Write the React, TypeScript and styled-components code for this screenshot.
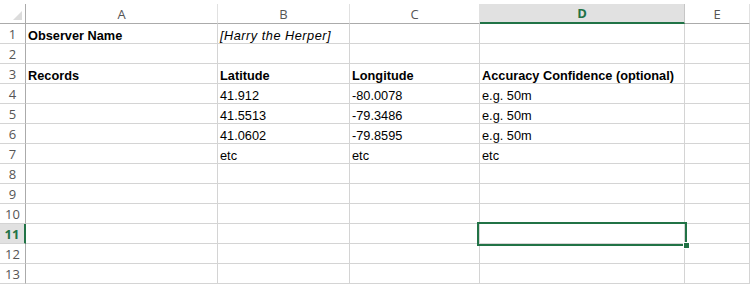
import { createGlobalStyle, styled } from 'styled-components'

const GlobalStyle = createGlobalStyle`
  body {
    margin: 0;
    background: #ffffff;
  }
`

const green = '#217346'
const gridLine = '#d4d4d4'
const headerLine = '#ababab'

const columns = [
  { name: 'A', width: 192 },
  { name: 'B', width: 132 },
  { name: 'C', width: 130 },
  { name: 'D', width: 205 },
  { name: 'E', width: 65 },
]

type CellData = { text: string; bold?: boolean; italic?: boolean }

const rows: CellData[][] = [
  [{ text: 'Observer Name', bold: true }, { text: '[Harry the Herper]', italic: true }],
  [],
  [
    { text: 'Records', bold: true },
    { text: 'Latitude', bold: true },
    { text: 'Longitude', bold: true },
    { text: 'Accuracy Confidence (optional)', bold: true },
  ],
  [{ text: '' }, { text: '41.912' }, { text: '-80.0078' }, { text: 'e.g. 50m' }],
  [{ text: '' }, { text: '41.5513' }, { text: '-79.3486' }, { text: 'e.g. 50m' }],
  [{ text: '' }, { text: '41.0602' }, { text: '-79.8595' }, { text: 'e.g. 50m' }],
  [{ text: '' }, { text: 'etc' }, { text: 'etc' }, { text: 'etc' }],
  [],
  [],
  [],
  [],
  [],
  [],
]

const activeRow = 10
const activeCol = 3

const Page = styled.div`
  padding-top: 4px;
  width: 750px;
  height: 281px;
  overflow: hidden;
`

const Sheet = styled.div`
  display: grid;
  grid-template-columns: 26px ${columns.map((c) => `${c.width}px`).join(' ')};
  grid-auto-rows: 20px;
`

const Corner = styled.div`
  box-sizing: border-box;
  border-right: 1px solid ${headerLine};
  border-bottom: 1px solid ${headerLine};
  display: flex;
  justify-content: flex-end;
  align-items: flex-end;
  padding: 0 3px 3px 0;
`

const CornerTriangle = styled.div`
  width: 0;
  height: 0;
  border-left: 9px solid transparent;
  border-bottom: 9px solid #dcdcdc;
`

const ColHeader = styled.div<{ $active?: boolean }>`
  box-sizing: border-box;
  display: flex;
  align-items: center;
  justify-content: center;
  font-family: 'Open Sans', 'Noto Sans', sans-serif;
  font-size: 13px;
  color: ${({ $active }) => ($active ? green : '#555555')};
  font-weight: ${({ $active }) => ($active ? 700 : 400)};
  background: ${({ $active }) => ($active ? '#e1e1e1' : '#ffffff')};
  border-right: 1px solid ${({ $active }) => ($active ? '#c6c6c6' : '#e1e1e1')};
  border-bottom: ${({ $active }) => ($active ? `2px solid ${green}` : `1px solid ${headerLine}`)};
`

const RowHeader = styled.div<{ $active?: boolean }>`
  box-sizing: border-box;
  display: flex;
  align-items: center;
  justify-content: center;
  font-family: 'Open Sans', 'Noto Sans', sans-serif;
  font-size: 13px;
  color: ${({ $active }) => ($active ? green : '#555555')};
  font-weight: ${({ $active }) => ($active ? 700 : 400)};
  background: ${({ $active }) => ($active ? '#e1e1e1' : '#ffffff')};
  border-bottom: 1px solid ${gridLine};
  border-right: ${({ $active }) => ($active ? `2px solid ${green}` : `1px solid ${headerLine}`)};
`

const Cell = styled.div<{ $bold?: boolean; $italic?: boolean; $selected?: boolean }>`
  box-sizing: border-box;
  position: ${({ $selected }) => ($selected ? 'relative' : 'static')};
  display: flex;
  align-items: flex-end;
  padding: 0 0 0 2px;
  border-right: 1px solid ${gridLine};
  border-bottom: 1px solid ${gridLine};
  font-family: 'Liberation Sans', Arial, sans-serif;
  font-size: 12.75px;
  line-height: 15px;
  color: #000000;
  white-space: nowrap;
  font-weight: ${({ $bold }) => ($bold ? 700 : 400)};
  font-style: ${({ $italic }) => ($italic ? 'italic' : 'normal')};
  letter-spacing: ${({ $italic }) => ($italic ? '0.5px' : 'normal')};
`

const Selection = styled.div`
  position: absolute;
  box-sizing: border-box;
  top: -2px;
  left: -3px;
  width: 210px;
  height: 24px;
  border: 2px solid ${green};
  pointer-events: none;
`

const FillHandle = styled.div`
  position: absolute;
  right: -4px;
  bottom: -4px;
  width: 5px;
  height: 5px;
  background: ${green};
  outline: 1px solid #ffffff;
`

export default function App() {
  return (
    <Page>
      <GlobalStyle />
      <Sheet>
        <Corner>
          <CornerTriangle />
        </Corner>
        {columns.map((c, i) => (
          <ColHeader key={c.name} $active={i === activeCol}>
            {c.name}
          </ColHeader>
        ))}
        {rows.map((row, r) => [
          <RowHeader key={`h${r}`} $active={r === activeRow}>
            {r + 1}
          </RowHeader>,
          ...columns.map((c, ci) => {
            const cell = row[ci]
            const selected = r === activeRow && ci === activeCol
            return (
              <Cell key={`${r}-${c.name}`} $bold={cell?.bold} $italic={cell?.italic} $selected={selected}>
                {cell?.text}
                {selected && (
                  <Selection>
                    <FillHandle />
                  </Selection>
                )}
              </Cell>
            )
          }),
        ])}
      </Sheet>
    </Page>
  )
}
